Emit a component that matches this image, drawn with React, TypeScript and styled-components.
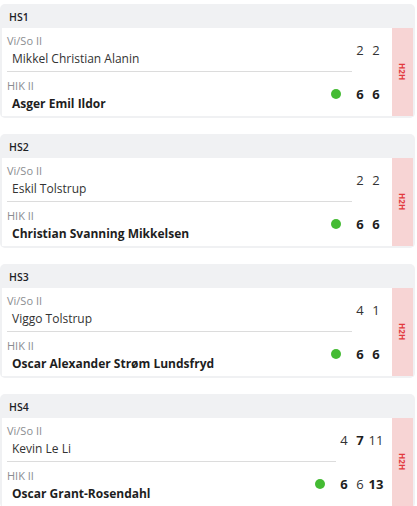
import React from "react";
import styled, { createGlobalStyle } from "styled-components";

const Global = createGlobalStyle`
  html, body { margin: 0; padding: 0; background: #ffffff; }
  body { font-family: "Open Sans", "Noto Sans", Arial, sans-serif; }
  * { box-sizing: border-box; }
`;

const Page = styled.div`
  padding: 4px 2px 0 0;
  display: flex;
  flex-direction: column;
  gap: 16px;
`;

const Card = styled.section`
  background: #f0f1f3;
  border-radius: 5px;
  padding: 0 2px 2px 2px;
`;

const Header = styled.div`
  height: 24px;
  display: flex;
  align-items: center;
  padding-left: 7px;
  padding-top: 1px;
  font-size: 10.5px;
  font-weight: 600;
  color: #1e2226;
`;

const Body = styled.div`
  display: flex;
  background: #ffffff;
`;

const Teams = styled.div`
  flex: 1;
  display: flex;
  flex-direction: column;
`;

const TeamRow = styled.div`
  display: flex;
  height: 44px;
`;

const Info = styled.div<{ $divider: boolean }>`
  flex: 1;
  margin-left: 5px;
  display: flex;
  align-items: center;
  border-bottom: ${(p) => (p.$divider ? "1px solid #dcdcdc" : "none")};
`;

const TextBlock = styled.div`
  flex: 1;
  display: flex;
  flex-direction: column;
  padding-top: 1px;
`;

const Club = styled.div`
  font-size: 11px;
  line-height: 15px;
  color: #8a8d91;
  margin-bottom: 3px;
`;

const Name = styled.div<{ $winner: boolean }>`
  font-size: 12px;
  line-height: 16px;
  padding-left: 5px;
  color: ${(p) => (p.$winner ? "#1e1e1e" : "#333333")};
  font-weight: ${(p) => (p.$winner ? 700 : 400)};
`;

const Dot = styled.span`
  width: 10px;
  height: 10px;
  border-radius: 50%;
  background: #44bb33;
  margin-right: 11px;
`;

const Scores = styled.div`
  display: flex;
  align-items: center;
  padding-right: 8px;
`;

const Score = styled.span<{ $won: boolean }>`
  width: 16px;
  text-align: center;
  font-size: 13px;
  color: ${(p) => (p.$won ? "#1e1e1e" : "#333333")};
  font-weight: ${(p) => (p.$won ? 700 : 400)};
`;

const H2H = styled.div`
  width: 21px;
  background: #f7d4d4;
  display: flex;
  align-items: center;
  justify-content: center;
  writing-mode: vertical-rl;
  font-size: 8px;
  font-weight: 700;
  color: #e23a3f;
  letter-spacing: 0.2px;
`;

type Team = { club: string; name: string; sets: number[] };
type Match = { title: string; home: Team; away: Team };

const matches: Match[] = [
  {
    title: "HS1",
    home: { club: "Vi/So II", name: "Mikkel Christian Alanin", sets: [2, 2] },
    away: { club: "HIK II", name: "Asger Emil Ildor", sets: [6, 6] },
  },
  {
    title: "HS2",
    home: { club: "Vi/So II", name: "Eskil Tolstrup", sets: [2, 2] },
    away: { club: "HIK II", name: "Christian Svanning Mikkelsen", sets: [6, 6] },
  },
  {
    title: "HS3",
    home: { club: "Vi/So II", name: "Viggo Tolstrup", sets: [4, 1] },
    away: { club: "HIK II", name: "Oscar Alexander Strøm Lundsfryd", sets: [6, 6] },
  },
  {
    title: "HS4",
    home: { club: "Vi/So II", name: "Kevin Le Li", sets: [4, 7, 11] },
    away: { club: "HIK II", name: "Oscar Grant-Rosendahl", sets: [6, 6, 13] },
  },
];

function wins(t: Team, o: Team) {
  return t.sets.filter((s, i) => s > o.sets[i]).length;
}

function Row({ team, other, first }: { team: Team; other: Team; first: boolean }) {
  const winner = wins(team, other) > wins(other, team);
  return (
    <TeamRow>
      <Info $divider={first}>
        <TextBlock>
          <Club>{team.club}</Club>
          <Name $winner={winner}>{team.name}</Name>
        </TextBlock>
        {winner && <Dot />}
      </Info>
      <Scores>
        {team.sets.map((s, i) => (
          <Score key={i} $won={s > other.sets[i]}>
            {s}
          </Score>
        ))}
      </Scores>
    </TeamRow>
  );
}

export default function App() {
  return (
    <>
      <Global />
      <Page>
        {matches.map((m) => (
          <Card key={m.title}>
            <Header>{m.title}</Header>
            <Body>
              <Teams>
                <Row team={m.home} other={m.away} first />
                <Row team={m.away} other={m.home} first={false} />
              </Teams>
              <H2H>H2H</H2H>
            </Body>
          </Card>
        ))}
      </Page>
    </>
  );
}
